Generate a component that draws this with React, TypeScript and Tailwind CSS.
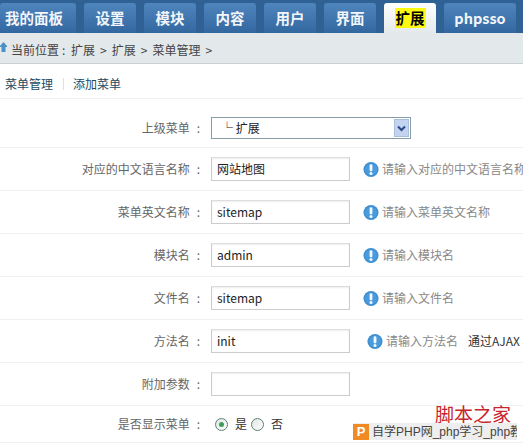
import React from "react";

const font = { fontFamily: '"Noto Sans CJK SC", "Liberation Sans", sans-serif' };

function Tab({ label, w, active, left }: { label: string; w: string; active?: boolean; left?: boolean }) {
  if (active) {
    return (
      <div className={`${w} h-[30px] rounded-t-[3px] bg-gradient-to-b from-white to-[#e4e9ec] flex items-center justify-center`}>
        <span className="bg-[#fdf90f] text-black font-bold text-[14.5px] leading-[20px] px-[1px]">{label}</span>
      </div>
    );
  }
  return (
    <div className={`${w} h-[30px] rounded-t-[3px] bg-gradient-to-b from-[#4f85bd] to-[#33679f] flex items-center ${left ? "justify-start pl-[5px]" : "justify-center"} text-[#f2f6fa] font-bold text-[14.5px]`}>
      {label}
    </div>
  );
}

function Info() {
  return (
    <svg width="16" height="17" viewBox="0 0 17 17" className="shrink-0">
      <circle cx="8.5" cy="8.5" r="8" fill="#3d8fd0" />
      <circle cx="8.5" cy="8.5" r="6.5" fill="#4a9ade" />
      <rect x="7" y="3" width="3" height="7.5" rx="1.5" fill="#f4f9fd" />
      <circle cx="8.5" cy="12.8" r="1.6" fill="#f4f9fd" />
    </svg>
  );
}

function Row({ label, children, h = "h-[43px]", pt = "" }: { label: string; children?: React.ReactNode; h?: string; pt?: string }) {
  return (
    <div className={`${h} ${pt} flex items-center border-b border-[#eef0f1]`}>
      <div className="w-[200px] shrink-0 text-right text-[12px] text-[#666]">
        {label}
        <span className="ml-[7px]">:</span>
      </div>
      <div className="pl-[11px] flex items-center min-w-0 flex-1">{children}</div>
    </div>
  );
}

function Input({ value }: { value?: string }) {
  return (
    <div className="w-[139px] h-[24px] shrink-0 border border-[#ccc] border-t-[#ddd] shadow-[inset_0_1px_2px_#eee] bg-white flex items-center pl-[5px] text-[12px] text-[#222]">
      {value}
    </div>
  );
}

function Hint({ text, ml = "ml-[13px]", extra }: { text: string; ml?: string; extra?: string }) {
  return (
    <div className={`${ml} flex items-center gap-[3px] whitespace-nowrap text-[12px] text-[#888]`}>
      <Info />
      <span>{text}</span>
      {extra && <span className="ml-[7px] text-[#333]">{extra}</span>}
    </div>
  );
}

function Radio({ on }: { on?: boolean }) {
  return (
    <span className="w-[13px] h-[13px] rounded-full border border-[#5e7f74] bg-gradient-to-br from-[#dfe5e3] to-white flex items-center justify-center shrink-0">
      {on && <span className="w-[5px] h-[5px] rounded-full bg-[#3f9a5c]" />}
    </span>
  );
}

export default function App() {
  return (
    <div style={font} className="relative w-[523px] h-[445px] overflow-hidden bg-white">
      <div className="h-[33px] bg-[#2f6195] flex items-end gap-[8px]">
        <Tab label="我的面板" w="w-[76px]" left />
        <Tab label="设置" w="w-[52px]" />
        <Tab label="模块" w="w-[52px]" />
        <Tab label="内容" w="w-[52px]" />
        <Tab label="用户" w="w-[52px]" />
        <Tab label="界面" w="w-[52px]" />
        <Tab label="扩展" w="w-[52px]" active />
        <Tab label="phpsso" w="w-[72px]" />
      </div>
      <div className="h-[31px] pt-[3px] bg-[#e3e8eb] border-b border-[#c9d0d4] flex items-center text-[12px] text-[#444] whitespace-nowrap">
        <svg width="7" height="12" viewBox="0 0 7 12" className="shrink-0 mr-[4px] mb-[3px]">
          <path d="M3.5 0 L8 5 L5.5 5 L5.5 10 L1.5 10 L1.5 5 L-1 5 Z" fill="#4a90c8" />
        </svg>
        <span>当前位置</span>
        <span className="ml-[3px] w-[9px]">:</span>
        <div className="flex items-center gap-[5px]">
          <span>扩展</span>
          <span>&gt;</span>
          <span>扩展</span>
          <span>&gt;</span>
          <span>菜单管理</span>
          <span>&gt;</span>
        </div>
      </div>
      <div className="h-[35px] pt-[6px] border-b border-[#eef0f1] flex items-center pl-[5px] text-[12px] text-[#1b4a63]">
        <span>菜单管理</span>
        <span className="mx-[10px] w-px h-[12px] bg-[#dde]" />
        <span className="-ml-[1px]">添加菜单</span>
      </div>
      <Row label="上级菜单" h="h-[49px]" pt="pt-[10px]">
        <div className="w-[200px] h-[22px] border border-[#8a9ca8] bg-white flex items-center text-[12px] text-[#222] pl-[9px] relative">
          <span>└ 扩展</span>
          <span className="absolute right-px top-px w-[15px] h-[18px] bg-[#c3d3f0] border border-[#a9bddd] flex items-center justify-center">
            <svg width="9" height="7" viewBox="0 0 9 7"><path d="M1 1.5 L4.5 5 L8 1.5" fill="none" stroke="#2b4a86" strokeWidth="2" /></svg>
          </span>
        </div>
      </Row>
      <Row label="对应的中文语言名称">
        <Input value="网站地图" />
        <Hint text="请输入对应的中文语言名称" />
      </Row>
      <Row label="菜单英文名称">
        <Input value="sitemap" />
        <Hint text="请输入菜单英文名称" />
      </Row>
      <Row label="模块名">
        <Input value="admin" />
        <Hint text="请输入模块名" />
      </Row>
      <Row label="文件名">
        <Input value="sitemap" />
        <Hint text="请输入文件名" />
      </Row>
      <Row label="方法名">
        <Input value="init" />
        <Hint text="请输入方法名" ml="ml-[17px]" extra="通过AJAX" />
      </Row>
      <Row label="附加参数">
        <Input />
      </Row>
      <Row label="是否显示菜单" h="h-[37px]">
        <div className="flex items-center text-[12px] text-[#333] ml-[4px]">
          <Radio on />
          <span className="ml-[7px] mr-[4px]">是</span>
          <Radio />
          <span className="ml-[7px]">否</span>
        </div>
      </Row>
      <div className="absolute left-[435px] top-[404px] text-[19px] leading-[19px] text-[#c8242c] whitespace-nowrap">脚本之家</div>
      <div
        style={{ fontFamily: '"Liberation Sans", "Noto Sans CJK SC", sans-serif' }}
        className="absolute left-[353px] top-[423px] w-[164px] h-[17px] bg-[#eeeeee] flex items-center overflow-hidden whitespace-nowrap text-[12px] leading-[16px] text-[#444]"
      >
        <span className="w-[16px] h-[16px] bg-[#f08a24] text-white font-bold text-[13px] leading-[16px] text-center shrink-0">P</span>
        <span className="ml-[3px]">自学PHP网_php学习_php教</span>
      </div>
    </div>
  );
}
